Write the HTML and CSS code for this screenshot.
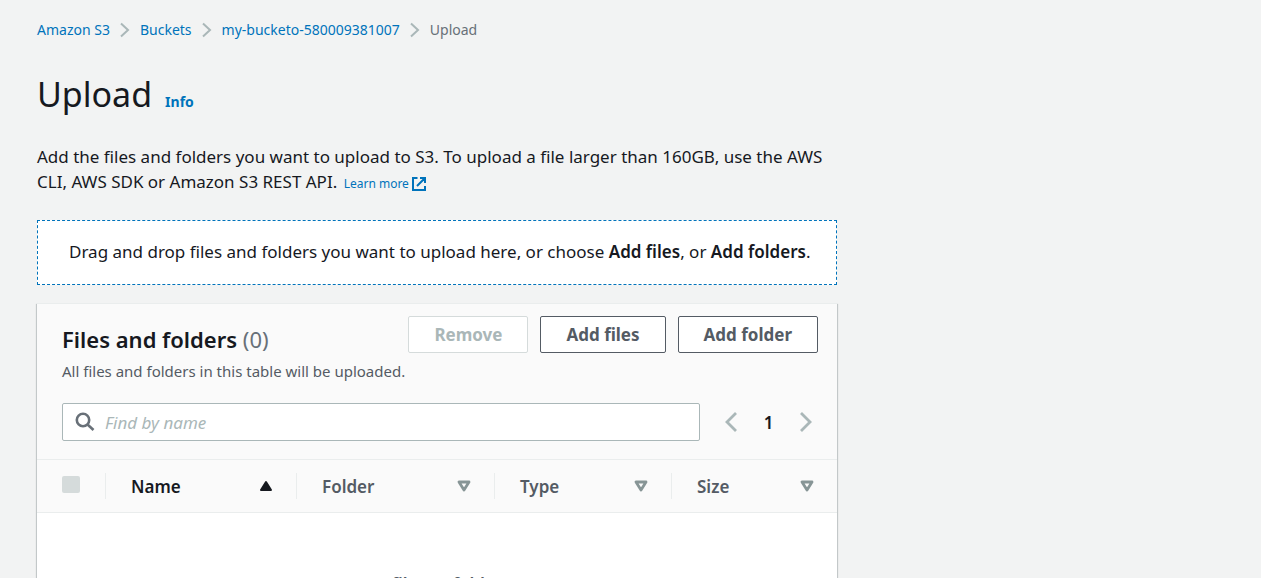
FILE: index.html
```html
<!DOCTYPE html>
<html lang="en">
<head>
<meta charset="utf-8">
<title>Upload objects</title>
<link rel="stylesheet" href="styles.css">
</head>
<body>
<main class="page">
  <nav class="breadcrumbs" aria-label="Breadcrumbs">
    <a class="link" href="#">Amazon S3</a>
    <svg class="crumb-icon" viewBox="0 0 10 16" aria-hidden="true"><path d="M1 1.5 8 8l-7 6.5"/></svg>
    <a class="link" href="#">Buckets</a>
    <svg class="crumb-icon" viewBox="0 0 10 16" aria-hidden="true"><path d="M1 1.5 8 8l-7 6.5"/></svg>
    <a class="link" href="#">my-bucketo-580009381007</a>
    <svg class="crumb-icon" viewBox="0 0 10 16" aria-hidden="true"><path d="M1 1.5 8 8l-7 6.5"/></svg>
    <span class="crumb-current">Upload</span>
  </nav>

  <header class="title-row">
    <h1 class="title">Upload</h1>
    <a class="link info" href="#">Info</a>
  </header>

  <p class="intro">Add the files and folders you want to upload to S3. To upload a file larger than 160GB, use the AWS CLI, AWS SDK or Amazon S3 REST API.
    <a class="link learn-more" href="#">Learn more <svg class="external-icon" viewBox="0 0 14 14" aria-hidden="true"><path d="M5.5 1H1v12h12V9M8 1h5v5M13 1 5 9"/></svg></a></p>

  <section class="dropzone">Drag and drop files and folders you want to upload here, or choose <b>Add files</b>, or <b>Add folders</b>.</section>

  <section class="panel">
    <div class="panel-head">
      <div class="panel-top">
        <div class="panel-titles">
          <h2 class="panel-title">Files and folders <span class="count">(0)</span></h2>
          <p class="panel-note">All files and folders in this table will be uploaded.</p>
        </div>
        <div class="actions">
          <button class="button" type="button" disabled>Remove</button>
          <button class="button" type="button">Add files</button>
          <button class="button" type="button">Add folder</button>
        </div>
      </div>
      <div class="filter-row">
        <label class="search">
          <svg class="search-icon" viewBox="0 0 20 20" aria-hidden="true"><circle cx="8" cy="8" r="6.2"/><path d="m12.5 12.5 6 5.5"/></svg>
          <input class="search-input" type="text" placeholder="Find by name" aria-label="Find by name">
        </label>
        <div class="pager">
          <button class="pager-button" type="button" aria-label="Previous page"><svg class="pager-icon" viewBox="0 0 12 20" aria-hidden="true"><path d="m11 1-9 9 9 9"/></svg></button>
          <span class="pager-current">1</span>
          <button class="pager-button" type="button" aria-label="Next page"><svg class="pager-icon" viewBox="0 0 12 20" aria-hidden="true"><path d="m1 1 9 9-9 9"/></svg></button>
        </div>
      </div>
    </div>
    <table class="files">
      <colgroup><col class="col-select"><col class="col-name"><col class="col-folder"><col class="col-type"><col class="col-size"></colgroup>
      <thead>
        <tr>
          <th><div class="cell cell-select"><input class="checkbox" type="checkbox" aria-label="Select all" disabled></div></th>
          <th><div class="cell cell-sorted">Name <svg class="sort-icon" viewBox="0 0 14 12" aria-hidden="true"><path class="sort-fill" d="M7 2 12 10H2z"/></svg></div></th>
          <th><div class="cell">Folder <svg class="sort-icon" viewBox="0 0 14 12" aria-hidden="true"><path class="sort-line" d="M2 2h10L7 10z"/></svg></div></th>
          <th><div class="cell">Type <svg class="sort-icon" viewBox="0 0 14 12" aria-hidden="true"><path class="sort-line" d="M2 2h10L7 10z"/></svg></div></th>
          <th><div class="cell">Size <svg class="sort-icon" viewBox="0 0 14 12" aria-hidden="true"><path class="sort-line" d="M2 2h10L7 10z"/></svg></div></th>
        </tr>
      </thead>
      <tbody>
        <tr><td class="empty" colspan="5">No files or folders</td></tr>
      </tbody>
    </table>
  </section>
</main>
</body>
</html>
```
FILE: styles.css
```css
* { box-sizing: border-box; }
html { overflow: hidden; }
body {
  margin: 0;
  background: #f2f3f3;
  color: #16191f;
  font: 17px/25px "Noto Sans", "Open Sans", sans-serif;
}
h1, h2, p { margin: 0; }
button, input { font: inherit; }
svg { fill: none; }
.page { max-width: 874px; padding: 20px 37px 0; }
.link { color: #0073bb; text-decoration: none; }

.breadcrumbs { display: flex; align-items: center; gap: 10px; font-size: 14px; line-height: 20px; }
.crumb-icon { width: 10px; height: 16px; stroke: #aab7b8; stroke-width: 2; }
.crumb-current { color: #687078; }

.title-row { display: flex; align-items: baseline; gap: 13px; margin-top: 31px; }
.title { font-size: 34px; line-height: 46px; font-weight: 400; }
.info { font-size: 14px; font-weight: 700; }

.intro { margin-top: 27px; }
.learn-more { margin-left: 2px; font-size: 12px; line-height: 16px; white-space: nowrap; }
.external-icon { width: 14px; height: 14px; vertical-align: -3px; stroke: #0073bb; stroke-width: 2; }

.dropzone {
  margin-top: 26px;
  padding: 18px 20px 20px 31px;
  border: 1px dashed #0073bb;
  background: #fff;
}
b { font-weight: 600; }

.panel {
  margin-top: 18px;
  border-top: 1px solid #eaeded;
  background: #fff;
  box-shadow: 0 1px 1px 0 rgba(0, 28, 36, .3), 1px 1px 1px 0 rgba(0, 28, 36, .15), -1px 1px 1px 0 rgba(0, 28, 36, .15);
}
.panel-head { padding: 12px 19px 18px 25px; background: #fafafa; }
.panel-top { display: flex; justify-content: space-between; }
.panel-titles { padding-top: 7px; }
.panel-title { font-size: 22px; line-height: 32px; font-weight: 600; }
.count { color: #687078; font-weight: 400; }
.panel-note { margin-top: 6px; font-size: 15px; line-height: 20px; color: #545b64; }
.actions { display: flex; align-items: flex-start; gap: 12px; }
.button {
  height: 37px;
  padding: 0 25px;
  border: 1px solid #545b64;
  border-radius: 2px;
  background: #fff;
  color: #545b64;
  font-weight: 700;
}
.button:disabled { border-color: #d5dbdb; color: #aab7b8; }

.filter-row { display: flex; align-items: center; gap: 25px; margin-top: 22px; }
.search {
  flex: 1;
  display: flex;
  align-items: center;
  gap: 10px;
  height: 38px;
  padding: 0 12px;
  border: 1px solid #aab7b8;
  border-radius: 2px;
  background: #fff;
}
.search-icon { width: 20px; height: 20px; stroke: #687078; stroke-width: 2.6; }
.search-input { flex: 1; min-width: 0; padding: 0; border: 0; outline: 0; background: none; color: #16191f; }
.search-input::placeholder { color: #aab7b8; font-style: italic; opacity: 1; }
.pager { display: flex; align-items: center; gap: 19px; padding-right: 6px; }
.pager-button { display: flex; padding: 0; border: 0; background: none; }
.pager-icon { width: 12px; height: 20px; stroke: #aab7b8; stroke-width: 2.8; }
.pager-current { width: 25px; text-align: center; font-weight: 600; }

.files { width: 100%; table-layout: fixed; border-collapse: collapse; }
.col-select { width: 69px; }
.col-name { width: 191px; }
.col-folder { width: 198px; }
.col-type { width: 177px; }
.col-size { width: 165px; }
th {
  padding: 13px 0;
  border-top: 1px solid #eaeded;
  border-bottom: 1px solid #eaeded;
  background: #fafafa;
  color: #545b64;
  font-weight: 600;
  text-align: left;
}
.cell {
  display: flex;
  align-items: center;
  justify-content: space-between;
  height: 26px;
  padding: 0 23px 0 25px;
  border-right: 1px solid #eaeded;
}
th:last-child .cell { border-right: 0; }
.cell-select { align-items: flex-start; padding-top: 3px; }
.cell-sorted { color: #16191f; }
.checkbox { appearance: none; width: 18px; height: 17px; margin: 0; border-radius: 2px; background: #d5dbdb; }
.sort-icon { width: 14px; height: 12px; stroke-linejoin: round; stroke-width: 2; }
.sort-fill { fill: #16191f; stroke: #16191f; }
.sort-line { stroke: #879596; stroke-width: 2.8; }
.empty { padding: 59px 20px 40px; color: #545b64; font-weight: 600; text-align: center; }
```
